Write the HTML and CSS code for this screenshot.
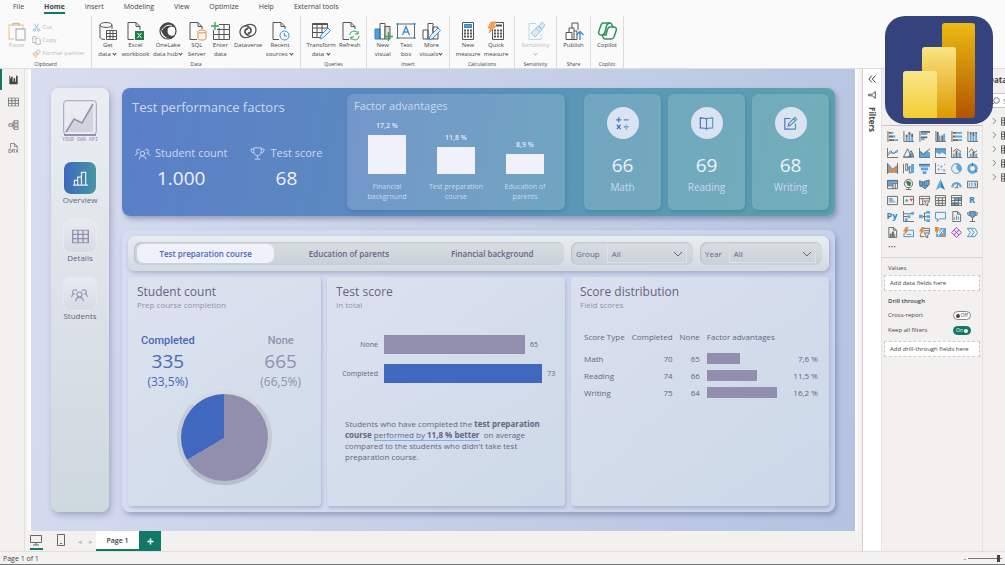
FILE: index.html
```html
<!DOCTYPE html>
<html lang="en">
<head>
    <meta charset="UTF-8">
    <meta name="viewport" content="width=device-width, initial-scale=1.0">
    <title>Test performance report</title>
    <link rel="stylesheet" href="styles.css">
</head>
<body>
    <svg class="defs" width="0" height="0" aria-hidden="true">
        <defs>
            <linearGradient id="inkGrad" gradientUnits="userSpaceOnUse" x1="2" y1="0" x2="22" y2="0">
                <stop offset="0" stop-color="#4468bd"/>
                <stop offset="1" stop-color="#4f9fac"/>
            </linearGradient>
            <symbol id="people" viewBox="0 0 24 20">
                <g fill="none" stroke="currentColor" stroke-width="1.6" stroke-linecap="round">
                    <circle cx="12" cy="10" r="3.6"/>
                    <path d="M6.5 19c.6-3 2.6-5 5.500-5s4.900 2 5.500 5"/>
                    <path d="M3.500 9A3.200 3.200 0 1 1 8 4.500M1 13c.3-2 1.500-3.500 4-4"/>
                    <path d="M20.500 9A3.200 3.200 0 1 0 16 4.500M23 13c-.3-2-1.500-3.500-4-4"/>
                </g>
            </symbol>
            <symbol id="chevron" viewBox="0 0 10 6">
                <path d="M1 1l4 4 4-4" fill="none" stroke="currentColor"/>
            </symbol>
            <symbol id="tableIcon" viewBox="0 0 12 10">
                <path d="M.5.5h11v9H.5zM.5 3.500h11M.5 6.500h11M4.200.5v9M7.800.5v9" fill="none" stroke="currentColor"/>
            </symbol>
        </defs>
    </svg>

    <header class="ribbon">
        <nav class="ribbon-tabs">
            <a href="#">File</a>
            <a href="#" class="active">Home</a>
            <a href="#">Insert</a>
            <a href="#">Modeling</a>
            <a href="#">View</a>
            <a href="#">Optimize</a>
            <a href="#">Help</a>
            <a href="#">External tools</a>
        </nav>
        <div class="ribbon-groups">
            <section class="group clipboard">
                <div class="tools disabled">
                    <button class="tool">
                        <svg viewBox="0 0 20 20" fill="none" stroke-width="1.300"><path d="M7 18H2V4h14v4" stroke="#f3cf9f"/><path d="M6 5V2.500h6V5" stroke="#bbb"/><path d="M9 8h9v11H9z" stroke="#bbb" fill="#fafafa"/></svg>
                        Paste
                    </button>
                    <div class="tool-list">
                        <button><svg viewBox="0 0 12 12" fill="none" stroke="#9aa"><path d="M3 1l5 7M9 1L4 8"/><circle cx="3" cy="9.500" r="1.500" stroke="#7bb3dd"/><circle cx="9" cy="9.500" r="1.500" stroke="#7bb3dd"/></svg>Cut</button>
                        <button><svg viewBox="0 0 12 12" fill="none" stroke="#aaa"><path d="M5 9H1V1h5"/><path d="M5 3h4l2 2v6H5z"/></svg>Copy</button>
                        <button><svg viewBox="0 0 12 12" fill="none" stroke="#aaa"><path d="M5 4l3 3 3-4-2-2z"/><path d="M5 4L1 6l4 5 3-4z" stroke="#e9b48a" fill="#f7d9bd"/></svg>Format painter</button>
                    </div>
                </div>
                <h2>Clipboard</h2>
            </section>
            <section class="group data">
                <div class="tools">
                    <button class="tool">
                        <svg viewBox="0 0 20 20" fill="none" stroke="#555"><ellipse cx="8" cy="4" rx="6" ry="2.500"/><path d="M2 4v12c0 1.500 2 2.500 5 2.500M14 4v4"/><path d="M8.500 9.500h10v9h-10zM8.500 12.500h10M8.500 15.500h10M12 9.500v9M15 9.500v9" fill="#fafafa"/></svg>
                        Get<br>data <span class="caret"></span>
                    </button>
                    <button class="tool">
                        <svg viewBox="0 0 20 20" fill="none" stroke="#555"><path d="M9 18.500H3v-17h8l4 4V9M11 1.500v4h4"/><path d="M10 10h9v9h-9z" fill="#1d7f45" stroke="none"/><path d="M12.500 12l4 5M16.500 12l-4 5" stroke="#fff"/></svg>
                        Excel<br>workbook
                    </button>
                    <button class="tool">
                        <svg viewBox="0 0 20 20" fill="none" stroke="#444"><circle cx="10" cy="10" r="8" stroke-width="1.200"/><path d="M3 7c2-6 11-7 14-1-4-2-8 0-8 4 0 5 5 6 7 5-1 1-2 2-4 2-5 0-8-5-9-10z" fill="#444"/><path d="M4 9c2-4 7-6 10-4" stroke="#fafafa"/></svg>
                        OneLake<br>data hub<span class="caret"></span>
                    </button>
                    <button class="tool">
                        <svg viewBox="0 0 20 20" fill="none" stroke="#555"><path d="M10 18.500H3v-17h8l4 4V8M11 1.500v4h4"/><g stroke="#e58a3c" fill="#fafafa"><path d="M11 10.500v7c0 2 8 2 8 0v-7"/><ellipse cx="15" cy="10.500" rx="4" ry="1.500"/></g></svg>
                        SQL<br>Server
                    </button>
                    <button class="tool">
                        <svg viewBox="0 0 20 20" fill="none" stroke="#555"><path d="M3.500 9v9.500h16v-15H9M3.500 13.500h16M7 8.500h12.500M9 7v11.500M14 3.500v15"/><path d="M5 1v8M1 5h8" stroke="#35a35a" stroke-width="1.300"/></svg>
                        Enter<br>data
                    </button>
                    <button class="tool">
                        <svg viewBox="0 0 20 20" fill="none" stroke="#555" stroke-width="1.300"><path d="M13 15c-4 3-11 2-11-4 0-5 6-8 9-5 4 3 1 8-2 7-3 0-3-5 1-5"/><path d="M7 5c4-3 11-2 11 4 0 5-6 8-9 5-4-3-1-8 2-7 3 0 3 5-1 5"/></svg>
                        Dataverse
                    </button>
                    <button class="tool">
                        <svg viewBox="0 0 20 20" fill="none" stroke="#555"><path d="M9 18.500H3v-17h8l4 4V8M11 1.500v4h4"/><g stroke="#3a8fd0"><circle cx="14.500" cy="14.500" r="4.500" fill="#fafafa"/><path d="M14.500 12v3h2.500"/></g></svg>
                        Recent<br>sources <span class="caret"></span>
                    </button>
                </div>
                <h2>Data</h2>
            </section>
            <section class="group queries">
                <div class="tools">
                    <button class="tool">
                        <svg viewBox="0 0 20 20" fill="none" stroke="#555"><path d="M9 16.500H1.500v-14h15v5M1.500 7h15M1.500 11.500h11M6 2.500v14M11 2.500v9M1.500 3.500h15"/><path d="M9 18l1-4 7-7 2.500 2.500-7 7z" stroke="#3a8fd0" fill="#e7f3fc"/></svg>
                        Transform<br>data <span class="caret"></span>
                    </button>
                    <button class="tool">
                        <svg viewBox="0 0 20 20" fill="none" stroke="#555"><path d="M9 18.500H3v-17h8l4 4V8M11 1.500v4h4"/><path d="M10 14c0-5 7-5 8-1M18 10v3h-3M19 15c0 5-7 5-8 1M11 19v-3h3" stroke="#35a35a"/></svg>
                        Refresh
                    </button>
                </div>
                <h2>Queries</h2>
            </section>
            <section class="group insert">
                <div class="tools">
                    <button class="tool">
                        <svg viewBox="0 0 20 20" fill="none" stroke="#555"><path d="M2 8h5v10H2z" fill="#4ba0de" stroke="#2f83c5"/><path d="M7 2.500h5V18H7z"/><path d="M12 5.500h5V18h-5z" fill="#ddd"/><path d="M15.500 11v9M11 15.500h9" stroke="#35a35a" stroke-width="1.300"/></svg>
                        New<br>visual
                    </button>
                    <button class="tool">
                        <svg viewBox="0 0 20 20" fill="none" stroke="#666"><path d="M1.500 3h17v14h-17z"/><path d="M6.500 14L10 5.500l3.500 8.500M7.700 11h4.600" stroke="#3a8fd0" stroke-width="1.300"/><path d="M.5 2h2v2h-2zM17.500 2h2v2h-2zM.5 16h2v2h-2zM17.500 16h2v2h-2z" fill="#3a8fd0" stroke="none"/></svg>
                        Text<br>box
                    </button>
                    <button class="tool">
                        <svg viewBox="0 0 20 20" fill="none" stroke="#555"><path d="M2 9h5v9H2zM7 2.500h5V18H7zM12 6h5v12h-5z"/><path d="M8 19l1-4 8-8 2.500 2.500-8 8z" stroke="#3a8fd0" fill="#e7f3fc"/></svg>
                        More<br>visuals<span class="caret"></span>
                    </button>
                </div>
                <h2>Insert</h2>
            </section>
            <section class="group calculations">
                <div class="tools">
                    <button class="tool">
                        <svg viewBox="0 0 20 20" fill="none" stroke="#555"><path d="M4.500 1.500h11v17h-11z"/><path d="M6.500 3.500h7v3h-7z" fill="#4ba0de" stroke="#2f83c5"/><path d="M6 9.500h8M6 12.500h8M6 15.500h8" stroke-width="2" stroke-dasharray="2 1"/></svg>
                        New<br>measure
                    </button>
                    <button class="tool">
                        <svg viewBox="0 0 20 20" fill="none" stroke="#555"><path d="M6.500 1.500h11v17h-11z"/><path d="M10 4.500h6" stroke-width="2"/><path d="M8 9.500h8M8 12.500h8M8 15.500h8" stroke-width="2" stroke-dasharray="2 1"/><path d="M5 1h5L7.500 5H10l-7 7 1.500-5H2z" fill="#f6a44c" stroke="#e58a3c" stroke-width=".7"/></svg>
                        Quick<br>measure
                    </button>
                </div>
                <h2>Calculations</h2>
            </section>
            <section class="group sensitivity">
                <div class="tools disabled">
                    <button class="tool">
                        <svg viewBox="0 0 20 20" fill="none" stroke="#9cc9ea"><path d="M10 2.500H3v16h12V13" stroke="#b9d9f0"/><path d="M5 12l5-5 4 4-5 5zM10 7l2-2 4 4-2 2M13 5l3-4 3 3-3 4z" fill="#d6eaf8"/></svg>
                        Sensitivity<br><span class="caret"></span>
                    </button>
                </div>
                <h2>Sensitivity</h2>
            </section>
            <section class="group share">
                <div class="tools">
                    <button class="tool">
                        <svg viewBox="0 0 20 20" fill="none" stroke="#555"><path d="M2 11.500h6v7H2zM8 7v-5h6v7M5 11V7h5v11.500M10 10h3v8.500H8"/><path d="M16 19v-8M12.500 14l3.500-3.500 3.500 3.500" stroke="#3a8fd0" stroke-width="1.400"/></svg>
                        Publish
                    </button>
                </div>
                <h2>Share</h2>
            </section>
            <section class="group copilot">
                <div class="tools">
                    <button class="tool">
                        <svg viewBox="0 0 20 20" fill="none" stroke="#2f8f5e" stroke-width="1.500"><path d="M6 2h7c2 0 2 2 3 4h1c2 0 3 2 2 4l-2 6c-1 2-2 2-3 2H8c-2 0-2-2-3-4H4c-2 0-3-2-2-4l2-6c.5-1 1-2 2-2z"/><path d="M16 6h-3c-2 0-2 1-3 4l-1 4H5M13 2c-2 0-3 1-3.500 3L8 11c-.5 2-1 3-3 3"/></svg>
                        Copilot
                    </button>
                </div>
                <h2>Copilot</h2>
            </section>
        </div>
    </header>

    <main class="workspace">
        <nav class="view-bar">
            <button class="active" aria-label="Report view"><svg viewBox="0 0 12 12"><path d="M1 1v10h10V1H9v7H8V4H6v4H5V2H3v2H2V1z" fill="#444"/></svg></button>
            <button aria-label="Table view"><svg viewBox="0 0 12 10" color="#777"><use href="#tableIcon"/></svg></button>
            <button aria-label="Model view"><svg viewBox="0 0 12 12" fill="none" stroke="#777"><path d="M.5 4.500h4v3h-4zM7 .5h4.500v3H7zM7 4.500h4.500v3H7zM7 8.500h4.500v3H7zM4.500 6H7M5.500 2v8M5.500 2H7M5.500 10H7"/></svg></button>
            <button aria-label="DAX query view"><svg viewBox="0 0 12 12" fill="none" stroke="#777"><path d="M2.500 6V.5h4.500l3.500 3.500v3M7 .5V4h3.500"/><path d="M.5 7.500v4h2l1-2-1-2zM5 11.500v-4h2v4M9 7.500l2.500 4M11.500 7.500L9 11.500"/></svg></button>
        </nav>

        <div class="stage">
            <div class="canvas">
                <aside class="side-nav">
                    <div class="brand">
                        <svg viewBox="0 0 34 36"><rect x=".7" y=".7" width="32.600" height="34" rx="3" fill="none" stroke="#a3a0ba"/><path d="M3 32L11 19l8 4L30 5v27z" fill="#d3d3e0"/><path d="M3 32L11 19l8 4L30 4" fill="none" stroke="#9391ae" stroke-width="1.600"/><path d="M1 34h32v2H1z" fill="#9391ae"/></svg>
                        <span>YOUR OWN KPI</span>
                    </div>
                    <a href="#" class="nav-item active">
                        <span class="tile"><svg viewBox="0 0 18 16" fill="none" stroke="#e6ecf8" stroke-width="1.300"><path d="M1 15h16M2.500 15V10H6v5M6 15V6.500h4V15M10 15V4.500M10 15V1.500h4.500V15"/></svg></span>
                        Overview
                    </a>
                    <a href="#" class="nav-item">
                        <span class="tile"><svg viewBox="0 0 12 10"><use href="#tableIcon"/></svg></span>
                        Details
                    </a>
                    <a href="#" class="nav-item">
                        <span class="tile"><svg viewBox="0 0 24 20"><use href="#people"/></svg></span>
                        Students
                    </a>
                </aside>

                <div class="report">
                    <section class="hero">
                        <div class="factors">
                            <h1>Test performance factors</h1>
                            <div class="kpis">
                                <div class="kpi">
                                    <p><svg viewBox="0 0 24 20"><use href="#people"/></svg>Student count</p>
                                    <strong>1.000</strong>
                                </div>
                                <div class="kpi">
                                    <p><svg viewBox="0 0 24 20" fill="none" stroke="currentColor" stroke-width="1.500"><path d="M6 1h12v6c0 4-3 6.500-6 6.500S6 11 6 7zM6 3H1.500c0 4 1.500 6 5 6M18 3h4.500c0 4-1.500 6-5 6M12 13.500V18M7.500 19h9"/></svg>Test score</p>
                                    <strong>68</strong>
                                </div>
                            </div>
                        </div>
                        <div class="glass advantages">
                            <h2>Factor advantages</h2>
                            <div class="columns">
                                <div class="column"><b>17,2 %</b><i style="height: 39px"></i></div>
                                <div class="column"><b>11,8 %</b><i style="height: 27px"></i></div>
                                <div class="column"><b>8,9 %</b><i style="height: 20px"></i></div>
                            </div>
                            <div class="column-names">
                                <span>Financial<br>background</span>
                                <span>Test preparation<br>course</span>
                                <span>Education of<br>parents</span>
                            </div>
                        </div>
                        <div class="scores">
                            <div class="glass score">
                                <span class="disc"><svg viewBox="0 0 24 24" fill="none" stroke="url(#inkGrad)" stroke-width="2"><path d="M2 6.010h8M6 2v8M14 6.010h8M3 14l6 7M9 14l-6 7M14 17.510h8M18 13.500v1.800M18 19.700v1.800"/></svg></span>
                                <strong>66</strong>
                                <span>Math</span>
                            </div>
                            <div class="glass score">
                                <span class="disc"><svg viewBox="0 0 24 24" fill="none" stroke="url(#inkGrad)" stroke-width="1.800"><path d="M12 5c-1-1.500-3-2-10-2v16c7 0 9 .5 10 2 1-1.500 3-2 10-2V3c-7 0-9 .5-10 2zM12 5l.01 17"/></svg></span>
                                <strong>69</strong>
                                <span>Reading</span>
                            </div>
                            <div class="glass score">
                                <span class="disc"><svg viewBox="0 0 24 24" fill="none" stroke="url(#inkGrad)" stroke-width="1.800"><path d="M12 4H3v17h17v-9M8.500 16l1-4.500L19 2l3 3-9.500 9.500zM16.500 4.500l3 3"/></svg></span>
                                <strong>68</strong>
                                <span>Writing</span>
                            </div>
                        </div>
                    </section>

                    <section class="board">
                        <div class="slicers">
                            <div class="segments">
                                <button class="active">Test preparation course</button>
                                <button>Education of parents</button>
                                <button>Financial background</button>
                            </div>
                            <div class="slicer">
                                <label for="group">Group</label>
                                <div class="pick">
                                    <select id="group"><option>All</option></select>
                                    <svg viewBox="0 0 10 6"><use href="#chevron"/></svg>
                                </div>
                            </div>
                            <div class="slicer">
                                <label for="year">Year</label>
                                <div class="pick">
                                    <select id="year"><option>All</option></select>
                                    <svg viewBox="0 0 10 6"><use href="#chevron"/></svg>
                                </div>
                            </div>
                        </div>

                        <div class="panels">
                            <article class="panel">
                                <h2>Student count</h2>
                                <p class="sub">Prep course completion</p>
                                <div class="counts">
                                    <div class="count completed">
                                        <h3>Completed</h3>
                                        <strong>335</strong>
                                        <span>(33,5%)</span>
                                    </div>
                                    <div class="count none">
                                        <h3>None</h3>
                                        <strong>665</strong>
                                        <span>(66,5%)</span>
                                    </div>
                                </div>
                                <div class="pie"></div>
                            </article>

                            <article class="panel">
                                <h2>Test score</h2>
                                <p class="sub">In total</p>
                                <div class="bars">
                                    <span>None</span>
                                    <div><i class="grey" style="width: 82%"></i>65</div>
                                    <span>Completed</span>
                                    <div><i class="blue" style="width: 92%"></i>73</div>
                                </div>
                                <p class="note">Students who have completed the <b>test preparation course</b> <u>performed by <b>11,8 % better</b></u>&nbsp; on average compared to the students who didn't take test preparation course.</p>
                            </article>

                            <article class="panel">
                                <h2>Score distribution</h2>
                                <p class="sub">Field scores</p>
                                <table>
                                    <thead>
                                        <tr><th>Score Type</th><th>Completed</th><th>None</th><th colspan="2">Factor advantages</th></tr>
                                    </thead>
                                    <tbody>
                                        <tr><td>Math</td><td>70</td><td>65</td><td><i style="width: 33px"></i></td><td>7,6 %</td></tr>
                                        <tr><td>Reading</td><td>74</td><td>66</td><td><i style="width: 50px"></i></td><td>11,5 %</td></tr>
                                        <tr><td>Writing</td><td>75</td><td>64</td><td><i style="width: 70px"></i></td><td>16,2 %</td></tr>
                                    </tbody>
                                </table>
                            </article>
                        </div>
                    </section>
                </div>
            </div>

            <footer class="pages">
                <button class="layout active" aria-label="Desktop layout"><svg viewBox="0 0 12 12" fill="none" stroke="#666"><path d="M.5 1.500h11v7H.5zM6 8.500v2.500M3 11h6"/></svg></button>
                <button class="layout" aria-label="Mobile layout"><svg viewBox="0 0 12 12" fill="none" stroke="#666"><path d="M2.500.5h7v11h-7zM5 9.500h2"/></svg></button>
                <button class="step" aria-label="Previous page">◂</button>
                <button class="step" aria-label="Next page">▸</button>
                <button class="page-tab">Page 1</button>
                <button class="add-page" aria-label="New page"><svg viewBox="0 0 8 8"><path d="M4 .5v7M.5 4h7" stroke="#fff" stroke-width="1.800"/></svg></button>
            </footer>
        </div>

        <aside class="filters">
            <svg viewBox="0 0 8 8" fill="none" stroke="#444"><path d="M4 .5L.8 4 4 7.500M7.500.5L4.300 4l3.200 3.500"/></svg>
            <svg viewBox="0 0 8 8" fill="none" stroke="#444" stroke-width=".9"><path d="M7.300.6v6.800L4.300 4.800H.7V3.200h3.600z"/></svg>
            <span>Filters</span>
        </aside>

        <aside class="visuals">
            <div class="pane-tab"></div>
            <div class="gallery">
                <svg viewBox="0 0 12 12"><path class="l" d="M1 0v12"/><path class="g" d="M2 1h3v2H2zM2 5h5v2H2zM2 9h6v2H2z"/><path class="b" d="M5 1h2v2H5zM7 5h2v2H7zM8 9h4v2H8z"/></svg>
                <svg viewBox="0 0 12 12"><path class="l" d="M1 0v11.500h11"/><path class="g" d="M3 4h2v3H3zM6 1h2v4H6zM9 3h2v4H9z"/><path class="b" d="M3 7h2v4H3zM6 5h2v6H6zM9 7h2v4H9z"/></svg>
                <svg viewBox="0 0 12 12"><path class="l" d="M1 0v12"/><path class="g" d="M2 0h10v2H2zM2 6h7v2H2z"/><path class="b" d="M2 2h7v2H2zM2 8h4v2H2z"/></svg>
                <svg viewBox="0 0 12 12"><path class="l" d="M1 0v11.500h11"/><path class="g" d="M2 1h2v10H2zM7 5h2v6H7z"/><path class="b" d="M4 5h2v6H4zM9 3h2v8H9z"/></svg>
                <svg viewBox="0 0 12 12"><path class="l" d="M1 0v12"/><path class="g" d="M2 1h4v2H2zM2 5h3v2H2zM2 9h6v2H2z"/><path class="b" d="M6 1h6v2H6zM5 5h7v2H5zM8 9h4v2H8z"/></svg>
                <svg viewBox="0 0 12 12"><path class="l" d="M1 0v11.500h11"/><path class="g" d="M3 1h2v3H3zM6 1h2v5H6zM9 1h2v2H9z"/><path class="b" d="M3 4h2v7H3zM6 6h2v5H6zM9 3h2v8H9z"/></svg>

                <svg viewBox="0 0 12 12"><path class="l" d="M.5 1v10.500H12M1 9l3-3 3 1 5-4"/><path class="s" d="M1 7l3-3 3 3 5-2"/></svg>
                <svg viewBox="0 0 12 12"><path class="b" d="M5 11l4-6 3 6z"/><path class="l" d="M.5 11L5 2l4 9zM7 6l2-2 3 7H.5"/></svg>
                <svg viewBox="0 0 12 12"><path class="b" d="M1 4l4 3 3-3 4 2v5H1z"/><path class="l" d="M.5 1v10.500H12M1 5l4 3 3-3 4-3"/></svg>
                <svg viewBox="0 0 12 12"><path class="b" d="M1 2h11v7L8 6 5 8 1 6z"/><path class="l" d="M.5 1v10.500H12M1 2h11"/></svg>
                <svg viewBox="0 0 12 12"><path class="l" d="M.5 0v11.500H12M2 5l4-3 5 3"/><path class="b" d="M2 7h2v4H2zM8 6h3v5H8z"/><path class="g" d="M5 4h2v7H5z"/></svg>
                <svg viewBox="0 0 12 12"><path class="l" d="M.5 0v11.500H12M2 6l3-4 3 4 3-2"/><path class="b" d="M3 7h2v4H3zM9 7h2v4H9z"/><path class="g" d="M6 5h2v6H6z"/></svg>

                <svg viewBox="0 0 12 12"><path class="b" d="M0 1h2l4 5 4-3h2v8H9L6 9l-3 2H0z"/><path class="o" d="M0 4h2l4 4 4-5h2v3L7 11H5L0 7z"/><path class="l" d="M.5 0v12M11.500 0v12"/></svg>
                <svg viewBox="0 0 12 12"><path class="l" d="M.5 1v10.500M3 1h2v7H3zM7 4h2v7H7z"/><path class="b" d="M5 4h2v4H5zM9 1h3v10H9z"/></svg>
                <svg viewBox="0 0 12 12"><path class="b" d="M0 1h12v3H0zM2 5h8v3H2zM4 9h4v3H4z"/><path class="l" d="M0 1.500h12"/></svg>
                <svg viewBox="0 0 12 12"><path class="l" d="M.5 0v11.500H12"/><path class="b" d="M3 6h2v2H3zM6 3h2v2H6zM9 7h2v2H9z"/><path class="g" d="M3 2h1v1H3zM7 7h1v1H7zM10 1h1v1h-1z"/></svg>
                <svg viewBox="0 0 12 12"><circle class="s" cx="6" cy="6" r="5.300"/><path class="b" d="M6 .5A5.500 5.500 0 0 1 9.500 10L6 6z"/></svg>
                <svg viewBox="0 0 12 12"><circle cx="6" cy="6" r="4.200" fill="none" stroke="#5aa7e0" stroke-width="3"/><path d="M6 0v3M9 8l2 2" stroke="#555"/></svg>

                <svg viewBox="0 0 12 12"><path class="b" d="M0 1h6v6H0zM7 1h5v3H7z"/><path class="l" d="M.5 1.500h11v9H.5zM6.500 1v10M.5 7.500h6M6.500 5h5M9 5v6"/></svg>
                <svg viewBox="0 0 12 12"><circle class="l" cx="6" cy="5" r="4.500"/><path d="M3 3l3-1 3 2-1 4-3-1z" fill="#35844f"/><path class="l" d="M6 9.500V11M3 11.500h6"/></svg>
                <svg viewBox="0 0 12 12"><path class="b" d="M0 2l4 1 2-1 5-1v5L7 11 1 8z"/><path class="l" d="M.5 2l3.500 1v4l-3 1zM6 3l5-2v5L7 10.500 4 9M6 3v4h4"/></svg>
                <svg viewBox="0 0 12 12"><path d="M6 0l5 12-5-3z" fill="#2186c8"/><path class="b" d="M6 0L1 12l5-3z"/></svg>
                <svg viewBox="0 0 12 12"><path d="M1.500 9a4.500 4.500 0 0 1 9 0" fill="none" stroke="#5aa7e0" stroke-width="2.500"/><path class="l" d="M6 9l2-4M4 9.500h4"/></svg>
                <svg viewBox="0 0 12 12"><path class="l" d="M.5 2.500h11v7H.5z"/><path class="s" d="M2.500 4v4M4.500 4.500h1v3h-1M7.500 4.500h2v1.500h-1 1v1.500h-2"/></svg>

                <svg viewBox="0 0 12 12"><path class="l" d="M.5 1.500h11v9H.5z"/><path class="s" d="M2 4h4M2 7.500h7"/><path class="g" d="M2 5h5v1H2z"/></svg>
                <svg viewBox="0 0 12 12"><path class="l" d="M.5 1.500h11v9H.5z"/><path d="M2 7l2-3 2 3z" fill="#3f9d5b"/><path d="M7 4h4L9 7z" fill="#d8463f"/></svg>
                <svg viewBox="0 0 12 12"><path class="l" d="M6 10.500H.5v-9h11V6M.5 4h11M4 4v6.500M5.500 6.500h6L9.500 9v3l-2-1V9z"/></svg>
                <svg viewBox="0 0 12 12"><path class="l" d="M.5.5h11v11H.5zM.5 3h11M.5 6h11M.5 9h11M4 3v8M8 3v8"/></svg>
                <svg viewBox="0 0 12 12"><path class="b" d="M4 3h8v3H4zM0 8h8v4H0z"/><path class="l" d="M.5.5h11v11H.5zM.5 3h11M.5 6h11M.5 9h11M4 3v8M8 3v8"/></svg>
                <span>R</span>

                <span>Py</span>
                <svg viewBox="0 0 12 12"><path class="l" d="M.5 0v11.500H12M1 3h9M1 6h5"/><path class="b" d="M9 1h3v3H9zM5 4.500h3v3H5zM2 8h3v3H2z"/></svg>
                <svg viewBox="0 0 12 12"><path class="l" d="M4 6h4M6 2v8M6 2h2M6 10h2"/><path class="b" d="M0 4h4v4H0zM8 0h4v3H8zM8 4.500h4v3H8zM8 9h4v3H8z"/></svg>
                <svg viewBox="0 0 12 12"><path class="s" d="M.5 1.500h11v7H5l-2.500 3v-3h-2z"/></svg>
                <svg viewBox="0 0 12 12"><path class="l" d="M2 .5h5l3.500 3v8H2zM7 .5v3h3"/><path class="s" d="M4 9.500V7M6 9.500V5M8 9.500V6"/></svg>
                <svg viewBox="0 0 12 12"><path class="b" d="M3 1h6v4L6 8 3 5z"/><path class="l" d="M3 .5h6V5L6 7.500 3 5zM3 2H.5l1 3H3M9 2h2.500l-1 3H9M6 7.500V11M3 11.500h6"/></svg>

                <svg viewBox="0 0 12 12"><path class="l" d="M2 .5h5l3.500 3v8H2zM7 .5v3h3"/><path class="g" d="M3 7h2v4H3zM5.500 5h2v6h-2zM8 8h1v3H8z"/></svg>
                <svg viewBox="0 0 12 12"><path class="s" d="M3 3.500h8.500v7H1V7M4 8h5"/><path class="o" d="M3 0h3L4 4h2L1 9l1-4H0z"/></svg>
                <svg viewBox="0 0 12 12"><path class="l" d="M5 1.500h6.500V6M1.500 8v2.500H6M5 4h6M5.500 6.500h6L9.500 9v3l-2-1V9z"/><path class="o" d="M3 0h3L4 4h2L1 9l1-4H0z"/></svg>
                <svg viewBox="0 0 12 12"><path class="b" d="M5 1h7v10H1V7l4 1z"/><path d="M6 3l5 7M3 10l6-8" stroke="#fff"/><path class="o" d="M0 0h4v4L2 7 0 4zM8 7h3v4H8z"/></svg>
                <svg viewBox="0 0 12 12"><path d="M6 .5L11.500 6 6 11.500.5 6zM3.300 3.300l5.400 5.400M8.700 3.300L3.300 8.700" fill="#ecd9f3" stroke="#a04fb5"/></svg>
                <svg viewBox="0 0 12 12"><path class="s" d="M.5 1.500h4l3 4.500-3 4.500h-4L3.500 6zM5 1.500h3.500l3 4.500-3 4.500H5"/></svg>
            </div>
            <div class="dots">···</div>
            <div class="wells">
                <h3>Values</h3>
                <div class="well">Add data fields here</div>
                <h3 class="strong">Drill through</h3>
                <div class="setting">Cross-report<label class="switch"><input type="checkbox"><span>Off</span></label></div>
                <div class="setting">Keep all filters<label class="switch on"><input type="checkbox" checked><span>On</span></label></div>
                <div class="well">Add drill-through fields here</div>
            </div>
        </aside>

        <aside class="fields">
            <h2>Data</h2>
            <div class="search"><svg viewBox="0 0 8 8" fill="none" stroke="#777"><circle cx="4.500" cy="3.500" r="2.800"/><path d="M2.500 5.500L.5 7.500"/></svg><input type="text" placeholder="Search" aria-label="Search fields"></div>
            <ul>
                <li><svg viewBox="0 0 6 8"><path d="M1 .5L4.500 4 1 7.500" fill="none" stroke="#666"/></svg><svg class="tbl" viewBox="0 0 12 10"><use href="#tableIcon"/></svg></li>
                <li><svg viewBox="0 0 6 8"><path d="M1 .5L4.500 4 1 7.500" fill="none" stroke="#666"/></svg><svg class="tbl" viewBox="0 0 12 10"><use href="#tableIcon"/></svg></li>
                <li><svg viewBox="0 0 6 8"><path d="M1 .5L4.500 4 1 7.500" fill="none" stroke="#666"/></svg><svg class="tbl" viewBox="0 0 12 10"><use href="#tableIcon"/></svg></li>
                <li><svg viewBox="0 0 6 8"><path d="M1 .5L4.500 4 1 7.500" fill="none" stroke="#666"/></svg><svg class="tbl" viewBox="0 0 12 10"><use href="#tableIcon"/></svg></li>
                <li><svg viewBox="0 0 6 8"><path d="M1 .5L4.500 4 1 7.500" fill="none" stroke="#666"/></svg><svg class="tbl" viewBox="0 0 12 10"><use href="#tableIcon"/></svg></li>
            </ul>
        </aside>
    </main>

    <footer class="status">
        <span>Page 1 of 1</span>
        <div class="zoom"><span>-</span><input type="range" min="0" max="100" value="95" aria-label="Zoom"></div>
    </footer>

    <!-- app badge, sits over the ribbon and the panes -->
    <svg class="badge" viewBox="0 0 108 108">
        <defs>
            <linearGradient id="barBack" x1="0" y1="0" x2="0" y2="1"><stop offset="0" stop-color="#ebbb14"/><stop offset="1" stop-color="#b25400"/></linearGradient>
            <linearGradient id="barMid" x1="0" y1="0" x2="0" y2="1"><stop offset="0" stop-color="#f9e583"/><stop offset="1" stop-color="#de9800"/></linearGradient>
            <linearGradient id="barFront" x1="0" y1="0" x2="0" y2="1"><stop offset="0" stop-color="#f9e68b"/><stop offset="1" stop-color="#f3cd32"/></linearGradient>
        </defs>
        <rect width="108" height="108" rx="20" fill="#34437b"/>
        <rect x="57" y="7" width="33" height="95" rx="3" fill="url(#barBack)"/>
        <path d="M40 31h28a3 3 0 0 1 3 3v68H37V34a3 3 0 0 1 3-3z" fill="url(#barMid)"/>
        <path d="M21 55h28a3 3 0 0 1 3 3v44H21a3 3 0 0 1-3-3V58a3 3 0 0 1 3-3z" fill="url(#barFront)"/>
    </svg>
</body>
</html>
```

FILE: styles.css
```css
:root {
    --ink: #65657f;
    --muted: #9391ae;
    --blue: #3f68be;
    --grey-bar: #918fad;
    --green: #117865;
    --pane: #f2f1f0;
}
* {
    box-sizing: border-box;
}
body {
    margin: 0;
    min-height: 100vh;
    display: flex;
    flex-direction: column;
    font-family: 'Open Sans', 'Noto Sans', sans-serif;
    font-size: 8px;
    color: #444;
    background: #fafafa;
    position: relative;
    overflow-x: hidden;
}
h1, h2, h3, p, ul {
    margin: 0;
    padding: 0;
    font-weight: normal;
}
a {
    color: inherit;
    text-decoration: none;
}
button {
    border: none;
    background: none;
    padding: 0;
    font: inherit;
    color: inherit;
    cursor: pointer;
}
svg {
    display: block;
    flex: none;
}
.defs {
    position: absolute;
}

/* ribbon */
.ribbon {
    height: 68px;
    background: #fafafa;
    display: flex;
    flex-direction: column;
}
.ribbon-tabs {
    display: flex;
    gap: 20px;
    padding-left: 13px;
    height: 16px;
    font-size: 7px;
    line-height: 13px;
}
.ribbon-tabs a {
    height: 14px;
}
.ribbon-tabs .active {
    font-weight: bold;
    border-bottom: 2px solid var(--green);
}
.ribbon-groups {
    flex: 1;
    display: flex;
}
.group {
    display: flex;
    flex-direction: column;
    justify-content: space-between;
    border-right: 1px solid #dcdcdc;
    padding: 5px 4px 0;
}
.group h2 {
    font-size: 5px;
    line-height: 7px;
    text-align: center;
}
.clipboard { width: 92px; }
.data { width: 209px; }
.queries { width: 66px; }
.insert { width: 83px; }
.calculations { width: 65px; }
.sensitivity { width: 42px; }
.share { width: 34px; }
.copilot { width: 33px; }
.tools {
    display: flex;
    justify-content: space-around;
    font-size: 6px;
    line-height: 9px;
}
.tool {
    display: block;
    text-align: center;
    align-self: flex-start;
    white-space: nowrap;
}
.tool svg {
    width: 20px;
    height: 20px;
    margin: 0 auto;
}
.disabled {
    color: #bbb;
}
.tool-list {
    display: flex;
    flex-direction: column;
}
.tool-list button {
    display: flex;
    align-items: center;
    gap: 2px;
    height: 13px;
    white-space: nowrap;
}
.tool-list svg {
    width: 9px;
    height: 9px;
}
.caret {
    display: inline-block;
    width: 3px;
    height: 3px;
    border-right: 1px solid currentColor;
    border-bottom: 1px solid currentColor;
    transform: rotate(45deg);
    margin: 0 1px 1px;
}

/* workspace */
.workspace {
    flex: 1;
    display: flex;
    border-top: 1px solid #dedee2;
}
.view-bar {
    width: 25px;
    background: var(--pane);
    border-right: 1px solid #e0dfde;
    display: flex;
    flex-direction: column;
}
.view-bar button {
    height: 23px;
    border-left: 2px solid transparent;
    display: flex;
    align-items: center;
    justify-content: center;
}
.view-bar .active {
    height: 21px;
    border-color: var(--green);
}
.view-bar svg {
    width: 11px;
    height: 10px;
}
.stage {
    flex: 1;
    display: flex;
    flex-direction: column;
    background: var(--pane);
}
.canvas {
    flex: 1;
    margin: 0 7px 0 6px;
    padding: 19px 20px;
    display: flex;
    gap: 13px;
    background: linear-gradient(105deg, #d9ddf0 0%, #ccd4ea 35%, #b5c3e0 100%);
    box-shadow: 0 0 4px 3px #fff;
    clip-path: inset(0 -7px);
}

/* report navigation */
.side-nav {
    width: 58px;
    border-radius: 8px;
    background: linear-gradient(#eaeef2, #dce2e7 50%, #ced8df);
    box-shadow: 2px 3px 6px rgba(100, 110, 150, .45);
    padding-top: 12px;
    display: flex;
    flex-direction: column;
    align-items: center;
    gap: 14px;
}
.brand {
    height: 48px;
    text-align: center;
    font-family: 'Liberation Mono', monospace;
    font-size: 5px;
    line-height: 6px;
    color: var(--muted);
    white-space: nowrap;
}
.brand svg {
    width: 34px;
    height: 36px;
    margin: 0 auto 1px;
}
.nav-item {
    display: flex;
    flex-direction: column;
    align-items: center;
    font-size: 8px;
    line-height: 12px;
    color: var(--ink);
}
.tile {
    width: 32px;
    height: 32px;
    border-radius: 7px;
    display: flex;
    align-items: center;
    justify-content: center;
    color: var(--muted);
    background: linear-gradient(#e8ebf1, #d6dce4);
    box-shadow: 0 0 2px rgba(255, 255, 255, .9);
}
.tile svg {
    width: 17px;
    height: 15px;
}
.active .tile {
    background: linear-gradient(90deg, #3f68be, #4597a2);
}

.report {
    flex: 1;
    display: flex;
    flex-direction: column;
    gap: 14px;
}

/* hero */
.hero {
    height: 128px;
    border-radius: 8px;
    padding: 6px;
    display: flex;
    background: linear-gradient(100deg, #5b7ec8, #5b8bbf 40%, #5a98b6 65%, #5ba2ae);
    box-shadow: 2px 3px 5px rgba(90, 100, 140, .5);
    color: #ccd8ef;
}
.factors {
    flex: 1;
    padding: 4px;
}
.factors h1 {
    font-size: 13px;
    line-height: 18px;
}
.kpis {
    display: flex;
    gap: 23px;
    margin-top: 24px;
    padding-left: 3px;
}
.kpi {
    text-align: center;
}
.kpi p {
    display: flex;
    align-items: center;
    gap: 5px;
    font-size: 11px;
    line-height: 26px;
}
.kpi svg {
    width: 15px;
    height: 13px;
}
.kpi strong, .score strong {
    font-size: 19px;
    line-height: 24px;
    font-weight: normal;
    color: #eef2fb;
}
.glass {
    border-radius: 6px;
    background: rgba(255, 255, 255, .14);
    box-shadow: 1px 2px 4px rgba(50, 90, 130, .3);
}
.advantages {
    width: 218px;
    padding: 3px 7px;
}
.advantages h2 {
    font-size: 11px;
    line-height: 18px;
}
.columns, .column-names {
    display: grid;
    grid-template-columns: repeat(3, 69px);
    justify-content: center;
    text-align: center;
}
.columns {
    height: 59px;
    align-items: end;
}
.column b {
    display: block;
    font-size: 7px;
    line-height: 14px;
    font-weight: 600;
    color: #e2e9f6;
    margin-bottom: 2px;
}
.column i {
    display: block;
    width: 38px;
    margin: 0 auto;
    background: #f1f1fc;
}
.column-names {
    font-size: 7px;
    line-height: 10px;
    padding-top: 8px;
}
.scores {
    display: flex;
    gap: 7px;
    margin-left: 19px;
}
.score {
    width: 77px;
    padding-top: 13px;
    display: flex;
    flex-direction: column;
    align-items: center;
    font-size: 10px;
    line-height: 20px;
}
.disc {
    width: 32px;
    height: 32px;
    border-radius: 50%;
    background: #dae3f2;
    display: flex;
    align-items: center;
    justify-content: center;
}
.disc svg {
    width: 15px;
    height: 15px;
}
.score strong {
    margin-top: 14px;
}

/* board */
.board {
    flex: 1;
    display: flex;
    flex-direction: column;
    gap: 6px;
    padding: 6px;
    border-radius: 8px;
    background: rgba(222, 228, 245, .4);
    box-shadow: 2px 3px 5px rgba(100, 110, 150, .5);
}
.slicers {
    display: flex;
    gap: 7px;
    height: 35px;
    padding: 6px 7px 6px 6px;
    border-radius: 7px;
    background: linear-gradient(#e9edf0, #d2dae2);
    box-shadow: 1px 2px 4px rgba(100, 110, 150, .4);
    font-size: 8px;
    color: var(--ink);
}
.segments, .slicer {
    border-radius: 7px;
    background: linear-gradient(#d9dfe2, #c8d1d9);
    box-shadow: inset 1px 1px 2px rgba(120, 130, 150, .3);
    display: flex;
}
.segments {
    flex: 1;
}
.segments button {
    flex: 1;
    font-weight: 600;
    border-radius: 7px;
    margin: 2px 3px;
}
.segments .active {
    background: #f1f1fc;
    color: #4a67ba;
}
.slicer {
    width: 122px;
    align-items: center;
    gap: 7px;
    padding: 2px 6px 2px 5px;
}
.pick {
    flex: 1;
    position: relative;
    border: 1px solid #dce1e4;
}
.pick select {
    appearance: none;
    width: 100%;
    height: 17px;
    border: none;
    background: none;
    font: inherit;
    color: inherit;
    padding: 0 4px;
}
.pick svg {
    position: absolute;
    right: 3px;
    top: 6px;
    width: 10px;
    height: 6px;
    pointer-events: none;
}
.panels {
    flex: 1;
    display: grid;
    grid-template-columns: 193fr 238fr 258fr;
    gap: 6px;
    color: var(--ink);
}
.panel {
    padding: 6px 9px;
    border-radius: 4px;
    background: linear-gradient(150deg, rgba(224, 228, 240, .7), rgba(205, 219, 231, .7));
    box-shadow: 1px 2px 3px rgba(110, 120, 160, .35);
}
.panel h2 {
    font-size: 12px;
    line-height: 17px;
}
.sub {
    font-size: 8px;
    line-height: 9px;
    color: var(--muted);
}
.counts {
    display: flex;
    justify-content: space-between;
    padding: 26px 11px 0 4px;
}
.count {
    display: flex;
    flex-direction: column;
    align-items: center;
}
.count h3 {
    font-family: Roboto, sans-serif;
    font-size: 11px;
    line-height: 12px;
    font-weight: 500;
}
.count strong {
    font-size: 19px;
    line-height: 28px;
    font-weight: normal;
}
.count span {
    font-size: 12px;
    line-height: 13px;
}
.completed {
    color: #4a67ba;
}
.none {
    color: var(--muted);
}
.pie {
    width: 95px;
    height: 95px;
    margin: 2px auto 0;
    border-radius: 50%;
    border: 4px solid #c4ccd6;
    border-top-color: #d4dade;
    border-bottom-color: #b3bfcb;
    background: conic-gradient(var(--grey-bar) 66.5%, var(--blue) 0);
}
.bars {
    display: grid;
    grid-template-columns: 42px 1fr;
    gap: 10px 6px;
    align-items: center;
    margin-top: 26px;
    font-size: 7px;
    line-height: 19px;
}
.bars > span {
    text-align: right;
}
.bars div {
    display: flex;
    gap: 5px;
}
.bars i {
    height: 19px;
}
.blue {
    background: var(--blue);
}
.grey, td i {
    background: var(--grey-bar);
}
.note {
    font-size: 8px;
    line-height: 11px;
    padding: 35px 10px 0 9px;
}
.note u {
    text-decoration: none;
    border-bottom: 1px solid #79aee6;
}
table {
    margin: 19px 0 0 4px;
    border-collapse: collapse;
    font-size: 8px;
    line-height: 17px;
}
th, td {
    padding: 0 7px 0 0;
    font-weight: normal;
    text-align: right;
    white-space: nowrap;
}
th:first-child, td:first-child, th:last-child {
    text-align: left;
}
th {
    padding-bottom: 5px;
}
td:last-child {
    width: 34px;
    padding: 0;
}
td i {
    display: block;
    height: 11px;
}

/* page tabs */
.pages {
    height: 20px;
    display: flex;
    align-items: center;
    padding-left: 5px;
    font-size: 7px;
    background: var(--pane);
}
.layout {
    width: 13px;
    height: 17px;
    margin-right: 6px;
    border-bottom: 2px solid transparent;
}
.layout svg {
    width: 12px;
    height: 12px;
}
.layout.active {
    margin-right: 12px;
    border-color: var(--green);
}
.step {
    width: 11px;
    color: #bbb;
}
.page-tab {
    width: 43px;
    height: 20px;
    background: #fff;
    border-bottom: 2px solid var(--green);
    font-weight: 600;
}
.add-page {
    width: 22px;
    height: 20px;
    background: var(--green);
    display: flex;
    align-items: center;
    justify-content: center;
}
.add-page svg {
    width: 7px;
    height: 7px;
}

/* panes */
.filters {
    width: 20px;
    background: #fff;
    border-left: 1px solid #d0cfce;
    border-right: 1px solid #e6e5e4;
    display: flex;
    flex-direction: column;
    align-items: center;
    gap: 8px;
    padding-top: 6px;
}
.filters svg {
    width: 8px;
    height: 8px;
}
.filters span {
    writing-mode: vertical-rl;
    font-size: 8px;
    font-weight: bold;
    line-height: 10px;
}
.visuals {
    width: 101px;
    background: var(--pane);
    border-right: 1px solid #e4e3e2;
    color: #444;
}
.pane-tab {
    height: 57px;
    border-bottom: 1px solid #c8c6c4;
}
.gallery {
    display: grid;
    grid-template-columns: repeat(6, 16px);
    grid-auto-rows: 16px;
    place-items: center;
    padding: 2px 2px 0;
}
.gallery svg {
    width: 11px;
    height: 11px;
}
.gallery span {
    font-size: 9px;
    line-height: 12px;
    font-weight: bold;
    color: #2f83c5;
}
.gallery .l {
    fill: none;
    stroke: #666;
}
.gallery .s {
    fill: none;
    stroke: #3a8fd0;
}
.gallery .g {
    fill: #666;
}
.gallery .b {
    fill: #5aa7e0;
}
.gallery .o {
    fill: #e58a3c;
}
.dots {
    padding-left: 6px;
    font-size: 10px;
    line-height: 12px;
}
.wells {
    margin-top: 5px;
    padding: 4px 2px;
    border-top: 1px solid #d8d6d4;
    font-size: 6px;
    line-height: 13px;
}
.wells h3 {
    font-size: 6px;
    padding-left: 4px;
}
.wells .strong {
    font-weight: 600;
    margin-top: 4px;
}
.well {
    background: #fff;
    border: 1px dashed #cfcdcb;
    line-height: 14px;
    padding-left: 5px;
    white-space: nowrap;
}
.setting {
    display: flex;
    align-items: center;
    justify-content: space-between;
    height: 15px;
    padding: 0 9px 0 4px;
}
.switch {
    width: 18px;
    height: 9px;
    border: 1px solid #888;
    border-radius: 5px;
    background: #fff;
    display: flex;
    align-items: center;
    justify-content: space-between;
    padding: 0 2px;
    font-size: 5px;
    line-height: 7px;
}
.switch input {
    appearance: none;
    width: 4px;
    height: 4px;
    margin: 0;
    border-radius: 50%;
    background: #444;
}
.switch.on {
    flex-direction: row-reverse;
    background: var(--green);
    border-color: var(--green);
    color: #fff;
}
.switch.on input {
    background: #fff;
}
.setting + .well {
    margin-top: 3px;
}
.fields {
    width: 22px;
    background: var(--pane);
    overflow: hidden;
    padding: 4px 0 0 5px;
}
.fields h2 {
    font-size: 8px;
    line-height: 14px;
    font-weight: bold;
}
.search {
    width: 80px;
    height: 15px;
    margin: 6px 0;
    border: 1px solid #c8c6c4;
    background: #fff;
    display: flex;
    align-items: center;
    gap: 3px;
    padding-left: 3px;
}
.search svg {
    width: 8px;
    height: 8px;
}
.search input {
    width: 50px;
    border: none;
    padding: 0;
    background: none;
    font: inherit;
}
.fields ul {
    list-style: none;
}
.fields li {
    display: flex;
    align-items: center;
    gap: 4px;
    height: 14px;
    padding-left: 4px;
}
.fields li svg {
    width: 5px;
    height: 8px;
}
.fields li .tbl {
    width: 10px;
    height: 9px;
}

.status {
    height: 14px;
    display: flex;
    justify-content: space-between;
    align-items: center;
    padding: 0 3px;
    font-size: 7px;
    background: #f3f2f1;
    border-top: 1px solid #e1dfdd;
    border-bottom: 1px solid #777;
}
.zoom {
    display: flex;
    align-items: center;
    gap: 2px;
}
.zoom input {
    appearance: none;
    width: 34px;
    height: 1px;
    margin: 0;
    background: #777;
}
.zoom input::-webkit-slider-thumb {
    appearance: none;
    width: 3px;
    height: 7px;
    background: #444;
}

.badge {
    position: absolute;
    top: 16px;
    right: 12px;
    width: 108px;
    height: 108px;
}
```
